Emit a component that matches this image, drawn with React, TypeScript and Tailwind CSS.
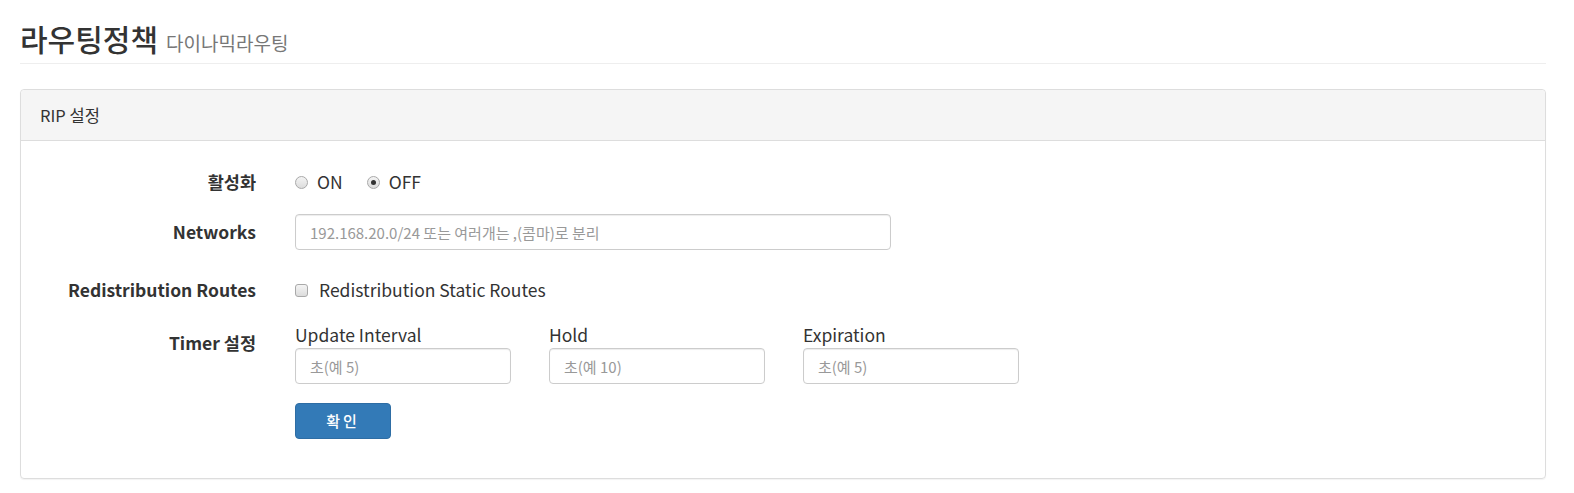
import { useState } from 'react';

const FONT = '[font-family:"Noto_Sans_CJK_KR","Noto_Sans",sans-serif]';

function Radio({ checked, label, onClick }: { checked: boolean; label: string; onClick: () => void }) {
  return (
    <button type="button" onClick={onClick} className="flex items-center gap-[9px]">
      <span className="flex h-[13px] w-[13px] items-center justify-center rounded-full border border-[#a9a9a9] bg-gradient-to-b from-[#f4f4f4] to-[#dcdcdc]">
        {checked ? <span className="h-[5px] w-[5px] rounded-full bg-[#333]" /> : null}
      </span>
      <span className="text-[17.5px] text-[#333]">{label}</span>
    </button>
  );
}

function Row({ label, children, className = '' }: { label: string; children: React.ReactNode; className?: string }) {
  return (
    <div className={`flex ${className}`}>
      <div className="flex w-[235px] shrink-0 items-center justify-end text-[17.5px] font-bold text-[#333]">
        {label}
      </div>
      <div className="ml-[39px] flex items-center">{children}</div>
    </div>
  );
}

export default function App() {
  const [enabled, setEnabled] = useState(false);
  const [redistribute, setRedistribute] = useState(false);

  const timers = [
    { label: 'Update Interval', placeholder: '초(예 5)' },
    { label: 'Hold', placeholder: '초(예 10)' },
    { label: 'Expiration', placeholder: '초(예 5)' },
  ];

  return (
    <div className={`min-h-screen bg-white pl-5 pr-[28px] pt-[23px] ${FONT}`}>
      <h1 className="flex items-baseline gap-[8px] border-b border-[#eee] pb-[10px] leading-none">
        <span className="text-[30px] font-medium text-[#333]">라우팅정책</span>
        <span className="text-[19px] font-normal text-[#777]">다이나믹라우팅</span>
      </h1>

      <div className="mt-[25px] rounded border border-[#ddd] shadow-[0_1px_1px_rgba(0,0,0,0.05)]">
        <div className="flex h-[51px] items-center rounded-t border-b border-[#ddd] bg-[#f5f5f5] px-[19px] text-[16.5px] text-[#333]">
          RIP 설정
        </div>

        <div className="pb-[39px] pt-[24px]">
          <Row label="활성화" className="h-[34px]">
            <div className="flex items-center gap-[24px]">
              <Radio checked={enabled} label="ON" onClick={() => setEnabled(true)} />
              <Radio checked={!enabled} label="OFF" onClick={() => setEnabled(false)} />
            </div>
          </Row>

          <Row label="Networks" className="mt-[15px] h-[36px]">
            <input
              type="text"
              placeholder="192.168.20.0/24 또는 여러개는 ,(콤마)로 분리"
              className="h-[36px] w-[596px] rounded border border-[#ccc] px-[14px] text-[15px] text-[#555] shadow-[inset_0_1px_1px_rgba(0,0,0,0.075)] outline-none placeholder:text-[#999]"
            />
          </Row>

          <Row label="Redistribution Routes" className="mt-[23px] h-[34px]">
            <label className="flex cursor-pointer items-center gap-[11px]">
              <button
                type="button"
                onClick={() => setRedistribute(!redistribute)}
                className="flex h-[13px] w-[13px] items-center justify-center rounded-[3px] border border-[#a9a9a9] bg-gradient-to-b from-[#f4f4f4] to-[#dcdcdc] text-[10px] leading-none text-[#333]"
              >
                {redistribute ? '✓' : null}
              </button>
              <span className="text-[17.5px] text-[#333]">Redistribution Static Routes</span>
            </label>
          </Row>

          <div className="mt-[17px] flex">
            <div className="w-[235px] shrink-0 pt-[8px] text-right text-[17.5px] font-bold leading-[22px] text-[#333]">
              Timer 설정
            </div>
            <div className="ml-[39px]">
              <div className="flex gap-[38px]">
                {timers.map((t) => (
                  <div key={t.label} className="w-[216px]">
                    <div className="mb-[2px] text-[17.5px] leading-[22px] text-[#333]">{t.label}</div>
                    <input
                      type="text"
                      placeholder={t.placeholder}
                      className="h-[36px] w-full rounded border border-[#ccc] px-[14px] text-[15px] text-[#555] shadow-[inset_0_1px_1px_rgba(0,0,0,0.075)] outline-none placeholder:text-[#999]"
                    />
                  </div>
                ))}
              </div>
              <button
                type="button"
                className="mt-[19px] h-[36px] w-[96px] rounded border border-[#2e6da4] bg-[#337ab7] text-[15px] font-medium tracking-[0.2em] text-white"
              >
                확인
              </button>
            </div>
          </div>
        </div>
      </div>
    </div>
  );
}
